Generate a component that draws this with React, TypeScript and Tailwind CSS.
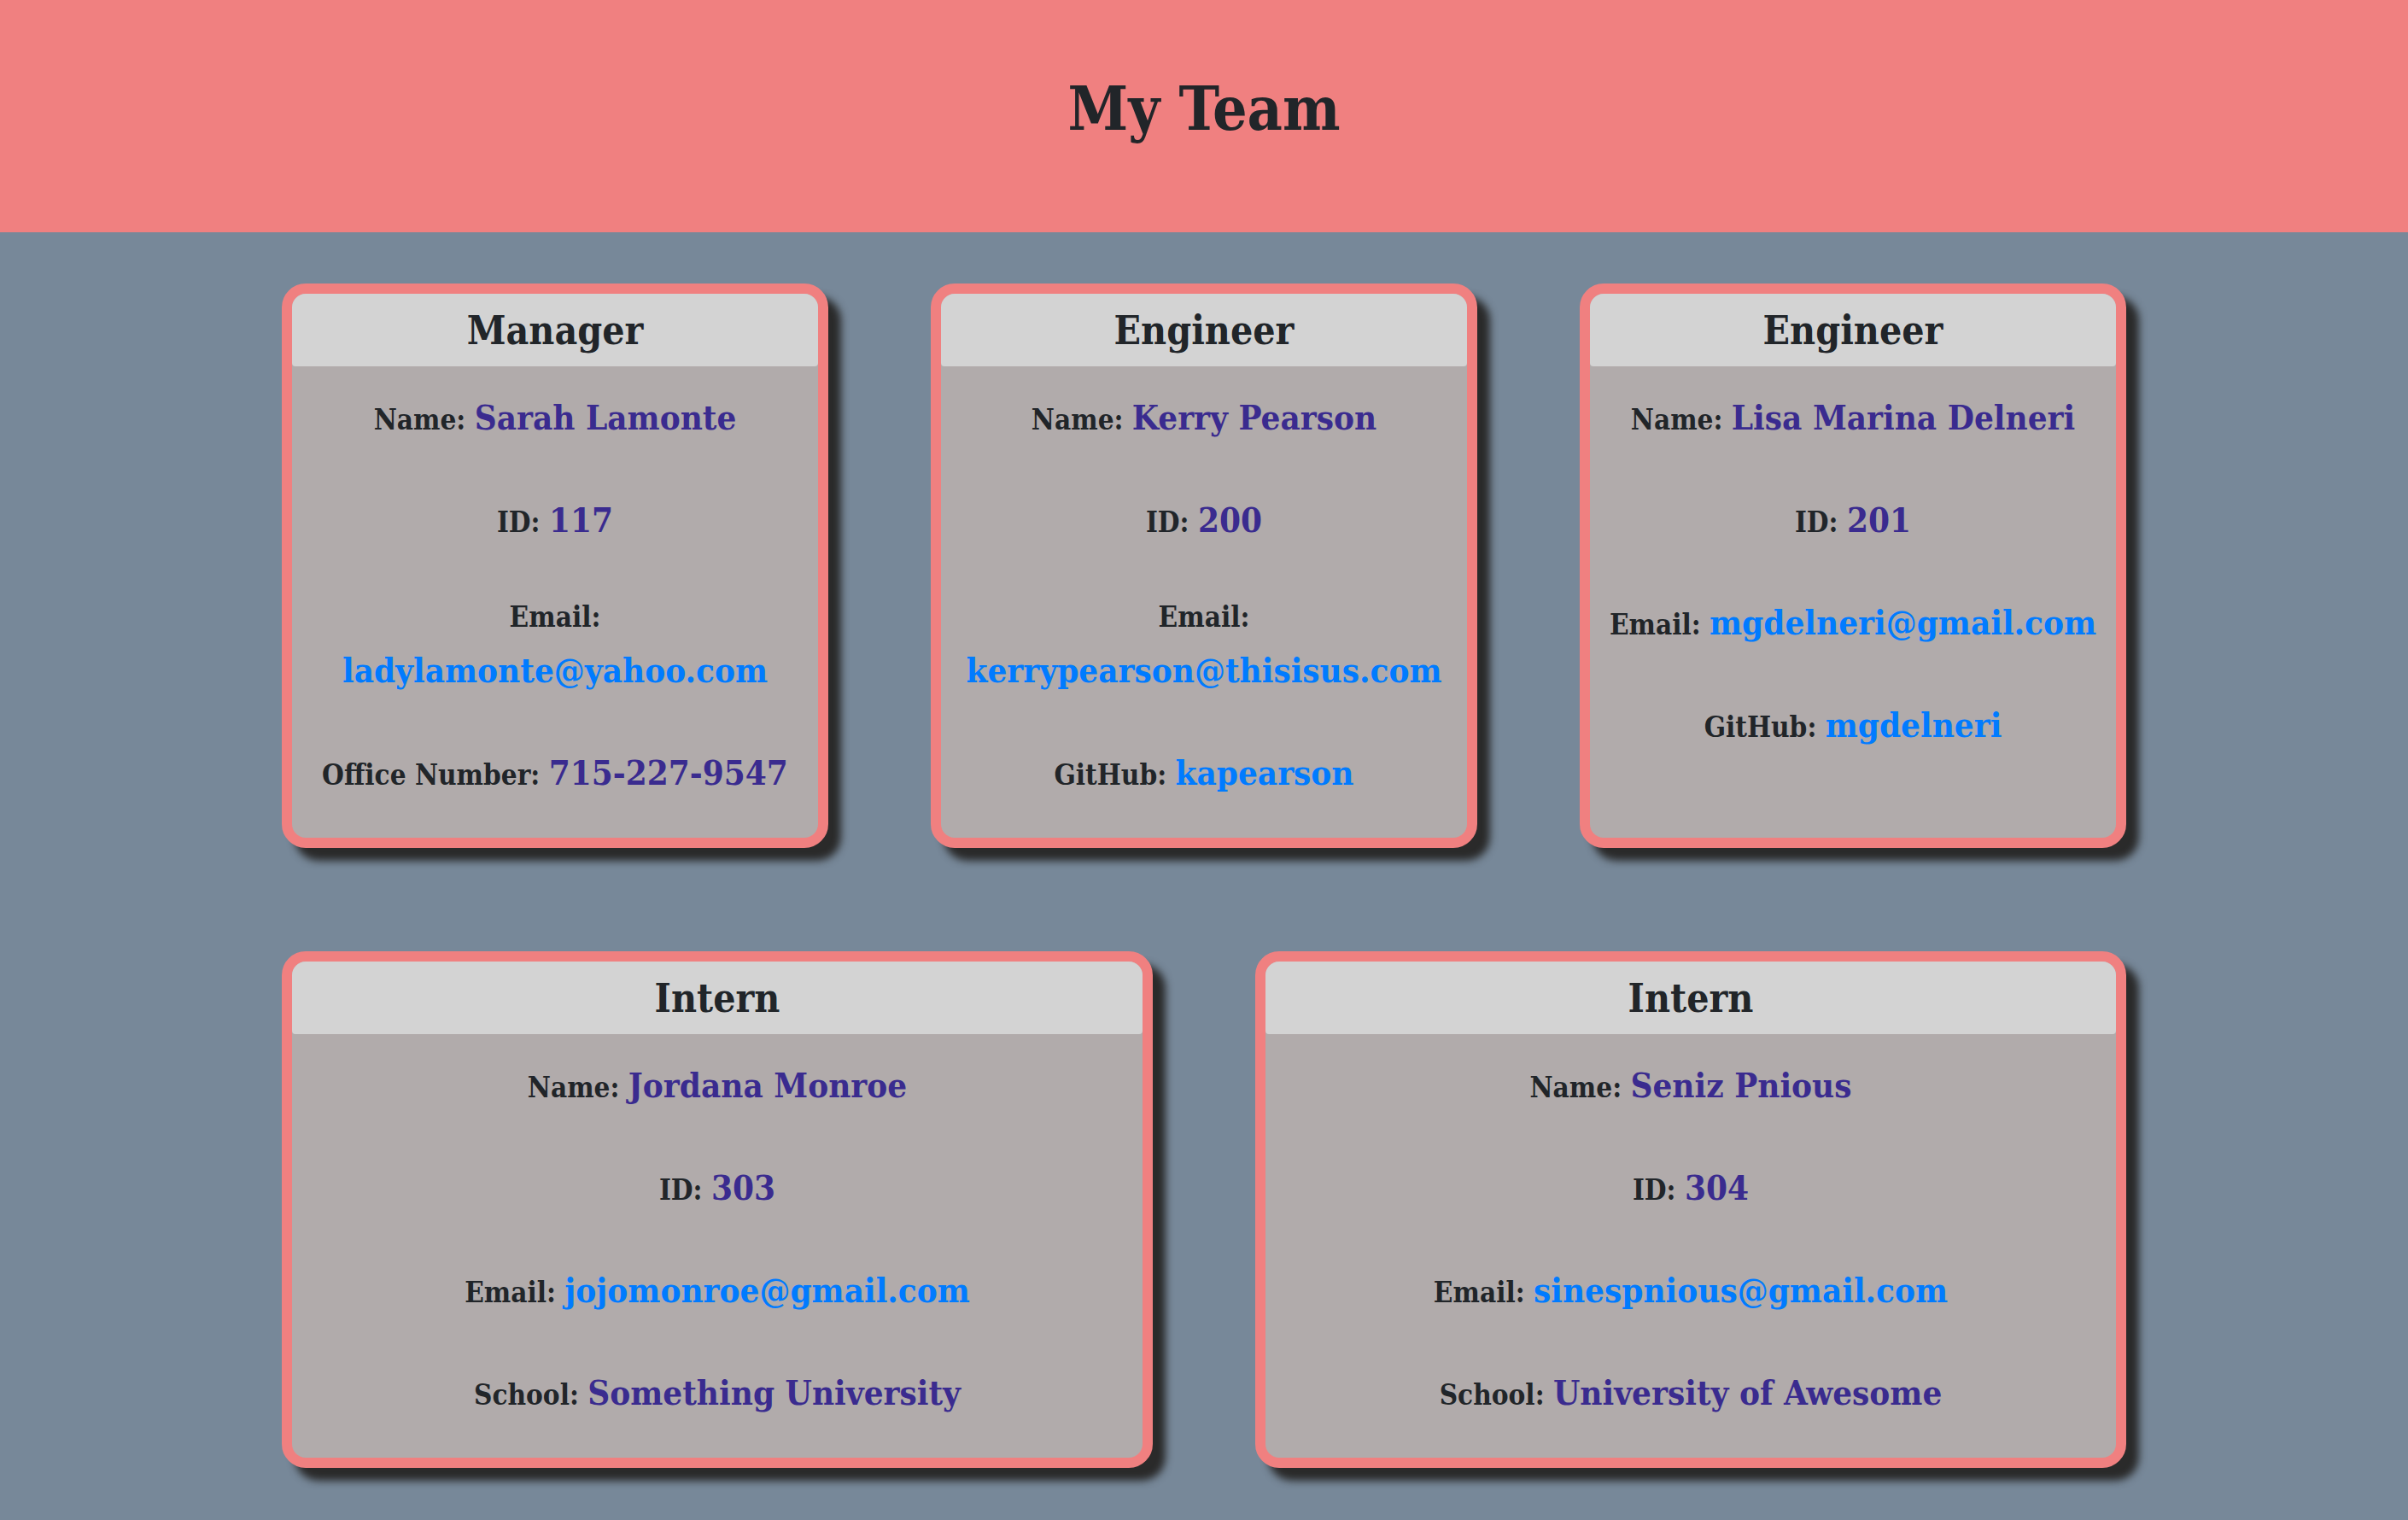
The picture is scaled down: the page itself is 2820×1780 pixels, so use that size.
import React from "react";

type Member = {
  role: string;
  name: string;
  id: string;
  email: string;
  extraLabel: string;
  extraValue: string;
  extraIsLink?: boolean;
};

const TOP_ROW: Member[] = [
  {
    role: "Manager",
    name: "Sarah Lamonte",
    id: "117",
    email: "ladylamonte@yahoo.com",
    extraLabel: "Office Number:",
    extraValue: "715-227-9547",
  },
  {
    role: "Engineer",
    name: "Kerry Pearson",
    id: "200",
    email: "kerrypearson@thisisus.com",
    extraLabel: "GitHub:",
    extraValue: "kapearson",
    extraIsLink: true,
  },
  {
    role: "Engineer",
    name: "Lisa Marina Delneri",
    id: "201",
    email: "mgdelneri@gmail.com",
    extraLabel: "GitHub:",
    extraValue: "mgdelneri",
    extraIsLink: true,
  },
];

const BOTTOM_ROW: Member[] = [
  {
    role: "Intern",
    name: "Jordana Monroe",
    id: "303",
    email: "jojomonroe@gmail.com",
    extraLabel: "School:",
    extraValue: "Something University",
  },
  {
    role: "Intern",
    name: "Seniz Pnious",
    id: "304",
    email: "sinespnious@gmail.com",
    extraLabel: "School:",
    extraValue: "University of Awesome",
  },
];

function Row({ label, value, link }: { label: string; value: string; link?: boolean }) {
  return (
    <p className="mb-[52px] last:mb-0 text-[33px] leading-[1.7] font-bold text-[#212529]">
      {label}{" "}
      <span
        className={`text-[40px] leading-[1.7] font-bold ${link ? "text-[#007bff]" : "text-[#3a2b8f]"}`}
      >
        {value}
      </span>
    </p>
  );
}

function MemberCard({ m }: { m: Member }) {
  return (
    <div className="overflow-hidden rounded-[28px] border-[12px] border-[#f08080] bg-[#b1abab] shadow-[15px_15px_10px_#2a2a2a]">
      <div className="flex h-[85px] items-center justify-center rounded-t-[12px] rounded-b-[4px] bg-[#d3d3d3]">
        <h2 className="text-[46px] leading-none font-bold text-[#212529]">{m.role}</h2>
      </div>
      <div className="px-[12px] pt-[26px] pb-[42px] text-center">
        <Row label="Name:" value={m.name} />
        <Row label="ID:" value={m.id} />
        <Row label="Email:" value={m.email} link />
        <Row label={m.extraLabel} value={m.extraValue} link={m.extraIsLink} />
      </div>
    </div>
  );
}

export default function App() {
  return (
    <div className="min-h-screen bg-[#778899] font-['DejaVu_Serif_Condensed','DejaVu_Serif',serif] font-stretch-condensed">
      <header className="flex h-[272px] items-center justify-center bg-[#f08080] pb-[18px]">
        <h1 className="text-[71px] leading-none font-bold text-[#212529]">My Team</h1>
      </header>

      <main className="mx-auto w-[2160px] pt-[60px] pb-[60px]">
        <div className="grid grid-cols-3 gap-[120px]">
          {TOP_ROW.map((m) => (
            <MemberCard key={m.id} m={m} />
          ))}
        </div>
        <div className="mt-[121px] grid grid-cols-2 gap-[120px]">
          {BOTTOM_ROW.map((m) => (
            <MemberCard key={m.id} m={m} />
          ))}
        </div>
      </main>
    </div>
  );
}
